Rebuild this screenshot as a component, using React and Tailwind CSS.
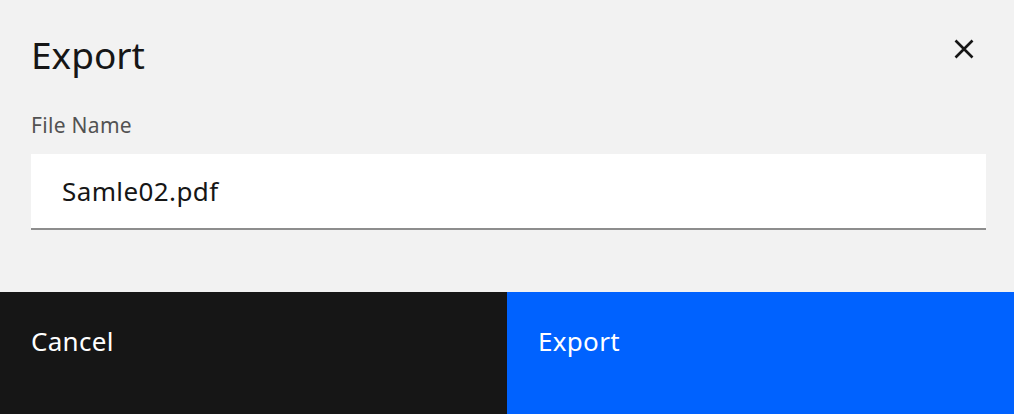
export default function App() {
  return (
    <div className="w-[1014px] h-[414px] bg-[#f2f2f2] flex flex-col overflow-hidden" style={{ fontFamily: '"Noto Sans", sans-serif' }}>
      <div className="flex justify-between items-start pl-[31px] pr-[38px] pt-[30px]">
        <h1 className="text-[37px] leading-[50px] text-[#161616] font-normal">Export</h1>
        <button className="mt-[7px] w-[24px] h-[24px] flex items-center justify-center">
          <svg width="20" height="20" viewBox="0 0 20 20">
            <path d="M1.5 1.5 L18.5 18.5 M18.5 1.5 L1.5 18.5" stroke="#161616" strokeWidth="2.6" fill="none" />
          </svg>
        </button>
      </div>
      <div className="pr-[28px] pl-[31px] pt-[31px]">
        <div className="text-[21px] leading-[28px] text-[#525252] tracking-[0.3px]">File Name</div>
        <div className="mt-[15px] h-[76px] bg-white border-b-2 border-[#8d8d8d] flex items-center pl-[31px] text-[26px] tracking-[0.4px] text-[#161616]">
          Samle02.pdf
        </div>
      </div>
      <div className="mt-auto flex h-[122px]">
        <div className="flex-1 bg-[#161616] text-white text-[26px] tracking-[0.3px] pl-[31px] pt-[30px]">Cancel</div>
        <div className="flex-1 bg-[#0062ff] text-white text-[26px] tracking-[0.3px] pl-[31px] pt-[30px]">Export</div>
      </div>
    </div>
  );
}
